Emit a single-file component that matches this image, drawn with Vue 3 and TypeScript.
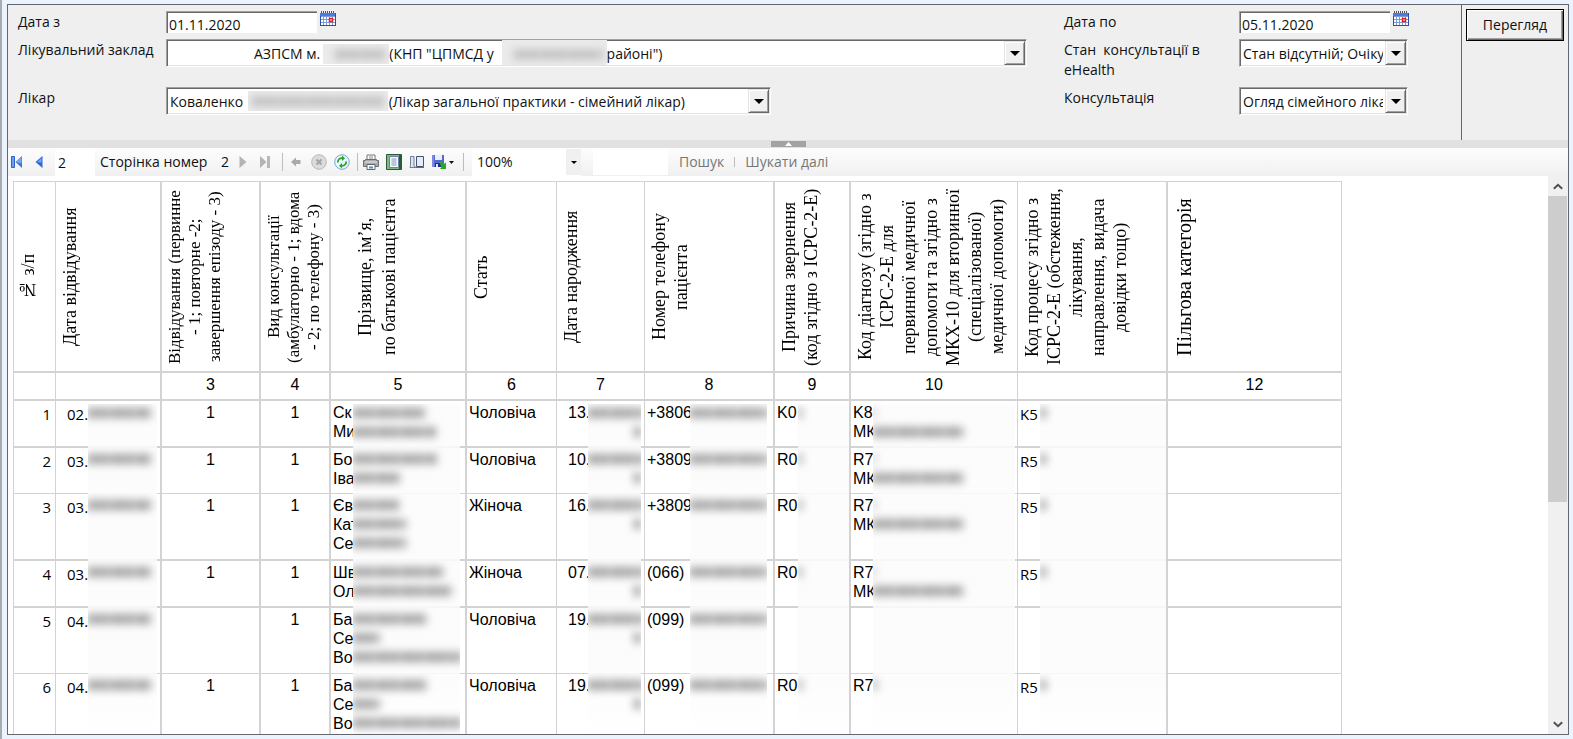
<script setup lang="ts">
import { ref } from 'vue'

interface Column {
  key: string
  title: string[]
  num: string
  width: number
}

interface Cell {
  key: string
  lines: string[]
  hidden?: number[]
}

interface Row {
  height: number
  cells: Cell[]
}

const columns: Column[] = [
  { key: 'index', title: ['№ з/п'], num: '', width: 42 },
  { key: 'date', title: ['Дата відвідування'], num: '', width: 106 },
  { key: 'visit', title: ['Відвідування (первинне', '- 1; повторне -2;', 'завершення епізоду - 3)'], num: '3', width: 99 },
  { key: 'kind', title: ['Вид консультації', '(амбулаторно - 1; вдома', '- 2; по телефону - 3)'], num: '4', width: 70 },
  { key: 'name', title: ['Прізвище, ім’я,', 'по батькові пацієнта'], num: '5', width: 136 },
  { key: 'sex', title: ['Стать'], num: '6', width: 90 },
  { key: 'birth', title: ['Дата народження'], num: '7', width: 88 },
  { key: 'phone', title: ['Номер телефону', 'пацієнта'], num: '8', width: 130 },
  { key: 'reason', title: ['Причина звернення', '(код згідно з ICPC-2-E)'], num: '9', width: 76 },
  {
    key: 'diagnosis',
    title: ['Код діагнозу (згідно з', 'ICPC-2-E для', 'первинної медичної', 'допомоги та згідно з', 'МКХ-10 для вторинної', '(спеціалізованої)', 'медичної допомоги)'],
    num: '10',
    width: 167,
  },
  {
    key: 'process',
    title: ['Код процесу згідно з', 'ICPC-2-E (обстеження,', 'лікування,', 'направлення, видача', 'довідки тощо)'],
    num: '',
    width: 150,
  },
  { key: 'benefit', title: ['Пільгова категорія'], num: '12', width: 174 },
]

function makeRow(
  n: number, height: number, date: string, visit: string, name: string[], nameHidden: number[],
  sex: string, birth: string, phone: string, reason: string, diagnosis: string[], process: string,
): Row {
  return {
    height,
    cells: [
      { key: 'index', lines: [String(n)] },
      { key: 'date', lines: [date], hidden: [63] },
      { key: 'visit', lines: [visit] },
      { key: 'kind', lines: ['1'] },
      { key: 'name', lines: name, hidden: nameHidden },
      { key: 'sex', lines: [sex] },
      { key: 'birth', lines: [birth], hidden: [56, 7] },
      { key: 'phone', lines: [phone], hidden: [78] },
      { key: 'reason', lines: [reason], hidden: reason ? [4] : [] },
      { key: 'diagnosis', lines: diagnosis, hidden: diagnosis.length > 1 ? [2, 90] : diagnosis[0] ? [4] : [] },
      { key: 'process', lines: [process], hidden: process ? [6] : [] },
      { key: 'benefit', lines: [''] },
    ],
  }
}

const rows: Row[] = [
  makeRow(1, 47, '02.', '1', ['Ск', 'Ми'], [72, 83], 'Чоловіча', '13.', '+3806', 'K0', ['K8', 'МК'], 'K5'),
  makeRow(2, 46, '03.', '1', ['Бо', 'Іва'], [84, 47], 'Чоловіча', '10.', '+3809', 'R0', ['R7', 'МК'], 'R5'),
  makeRow(3, 67, '03.', '1', ['Єв', 'Кат', 'Сер'], [46, 53, 53], 'Жіноча', '16.', '+3809', 'R0', ['R7', 'МК'], 'R5'),
  makeRow(4, 47, '03.', '1', ['Шв', 'Оле'], [90, 99], 'Жіноча', '07.', '(066)', 'R0', ['R7', 'МК'], 'R5'),
  makeRow(5, 66, '04.', '', ['Ба', 'Се', 'Во'], [74, 27, 108], 'Чоловіча', '19.', '(099)', '', [''], ''),
  makeRow(6, 68, '04.', '1', ['Ба', 'Се', 'Во'], [74, 27, 108], 'Чоловіча', '19.', '(099)', 'R0', ['R7'], 'R5'),
]

const gap = (n: number): string => '\u00a0'.repeat(n)
const facility = `АЗПСМ м.${gap(19)}(КНП "ЦПМСД у${gap(31)}районі")`
const doctor = `Коваленко${gap(40)}(Лікар загальної практики - сімейний лікар)`

const dateFrom = ref('01.11.2020')
const dateTo = ref('05.11.2020')
const page = ref('2')
const search = ref('')
</script>

<template>
  <div class="window">
    <main class="viewer">
      <form class="params" @submit.prevent>
        <div class="fields">
          <label for="from">Дата з</label>
          <div class="picker">
            <input id="from" v-model="dateFrom" type="text">
            <button type="button" class="icon" aria-label="Календар">
              <svg width="16" height="16" viewBox="0 0 16 16">
                <path d="M0 2h16v13H0z" fill="#2c50a8" /><path d="M0 2h15v3H0z" fill="#4a7be0" />
                <path d="M1 5h14v9H1z" fill="#7d9bd8" />
                <path d="M1 6h2v2H1zM4 6h2v2H4zM7 6h2v2H7zM10 6h2v2h-2zM13 6h2v2h-2zM1 9h2v2H1zM4 9h2v2H4zM7 9h2v2H7zM13 9h2v2h-2zM1 12h2v2H1zM4 12h2v2H4zM7 12h2v2H7zM10 12h2v2h-2zM13 12h2v2h-2z" fill="#fff" />
                <path d="M9.500 7.500h3v3h-3z" fill="#fff" stroke="#f01818" stroke-width="1.500" />
                <path d="M1 1h14" stroke="#555" stroke-dasharray="1 1" stroke-width="2" />
              </svg>
            </button>
          </div>
          <label for="to">Дата по</label>
          <div class="picker">
            <input id="to" v-model="dateTo" type="text">
            <button type="button" class="icon" aria-label="Календар">
              <svg width="16" height="16" viewBox="0 0 16 16">
                <path d="M0 2h16v13H0z" fill="#2c50a8" /><path d="M0 2h15v3H0z" fill="#4a7be0" />
                <path d="M1 5h14v9H1z" fill="#7d9bd8" />
                <path d="M1 6h2v2H1zM4 6h2v2H4zM7 6h2v2H7zM10 6h2v2h-2zM13 6h2v2h-2zM1 9h2v2H1zM4 9h2v2H4zM7 9h2v2H7zM13 9h2v2h-2zM1 12h2v2H1zM4 12h2v2H4zM7 12h2v2H7zM10 12h2v2h-2zM13 12h2v2h-2z" fill="#fff" />
                <path d="M9.500 7.500h3v3h-3z" fill="#fff" stroke="#f01818" stroke-width="1.500" />
                <path d="M1 1h14" stroke="#555" stroke-dasharray="1 1" stroke-width="2" />
              </svg>
            </button>
          </div>

          <label for="facility">Лікувальний заклад</label>
          <div class="combo facility">
            <select id="facility"><option>{{ facility }}</option></select>
            <span class="arrow" />
            <span class="veil town"><i /></span>
            <span class="veil district"><i /></span>
          </div>
          <label for="state">Стан&nbsp; консультації в<br>eHealth</label>
          <div class="combo small">
            <select id="state"><option>Стан відсутній; Очікування</option></select>
            <span class="arrow" />
          </div>

          <label for="doctor">Лікар</label>
          <div class="combo doctor">
            <select id="doctor"><option>{{ doctor }}</option></select>
            <span class="arrow" />
            <span class="veil person"><i /></span>
          </div>
          <label for="consult">Консультація</label>
          <div class="combo small">
            <select id="consult"><option>Огляд сімейного лікаря</option></select>
            <span class="arrow" />
          </div>
        </div>
        <div class="actions">
          <button type="submit" class="view">Перегляд</button>
        </div>
      </form>

      <div class="splitter">
        <button type="button" class="handle" aria-label="Згорнути">
          <svg width="7" height="4" viewBox="0 0 7 4"><path d="M0 4 3.500 0 7 4z" fill="#fff" /></svg>
        </button>
      </div>

      <div class="toolbar">
        <button type="button" class="icon first" aria-label="Перша сторінка">
          <svg width="12" height="14" viewBox="0 0 12 14"><path d="M.5 1.500h3v11h-3z" fill="#6e9bee" stroke="#2f62cf" /><path d="M11 1v12L4.500 7z" fill="#3b74e2" /><path d="M10.500 1.500v7L5 7z" fill="#7aa5f2" /></svg>
        </button>
        <button type="button" class="icon prev" aria-label="Попередня сторінка">
          <svg width="8" height="14" viewBox="0 0 8 14"><path d="M7.500 1v12L.5 7z" fill="#2f66d8" /><path d="M6.500 3v4.500L2 7z" fill="#76a3f2" /></svg>
        </button>
        <input v-model="page" class="page" type="text" aria-label="Сторінка">
        <span class="caption">Сторінка номер</span>
        <span class="total">2</span>
        <button type="button" class="icon next" aria-label="Наступна сторінка">
          <svg width="8" height="14" viewBox="0 0 8 14"><path d="M.5 1v12l7-6z" fill="#b4b4b4" /></svg>
        </button>
        <button type="button" class="icon last" aria-label="Остання сторінка">
          <svg width="12" height="14" viewBox="0 0 12 14"><path d="M1 1v12l6.500-6z" fill="#b4b4b4" /><path d="M8 1h3v12H8z" fill="#b8b8b8" /></svg>
        </button>
        <span class="sep s1" />
        <button type="button" class="icon back" aria-label="Назад">
          <svg width="10" height="10" viewBox="0 0 10 10"><path d="M0 5 5 .5V3h4.500v4H5v2.500z" fill="#a9a9a9" /></svg>
        </button>
        <button type="button" class="icon stop" aria-label="Зупинити">
          <svg width="16" height="16" viewBox="0 0 16 16"><circle cx="8" cy="8" r="7.300" fill="#dcdcdc" stroke="#b9b9b9" /><path d="m5.500 5.500 5 5M10.500 5.500l-5 5" stroke="#a6a6a6" stroke-width="2.200" /></svg>
        </button>
        <button type="button" class="icon refresh" aria-label="Оновити">
          <svg width="16" height="16" viewBox="0 0 16 16"><circle cx="8" cy="8" r="7.300" fill="#e9f5ff" stroke="#79a9d8" /><path d="M3.800 8.500c0-2.800 1.700-4.300 4.200-4.300M12.200 7.500c0 2.800-1.700 4.300-4.200 4.300" fill="none" stroke="#28a428" stroke-width="1.800" /><path d="M8 1.500 11 4.200 8 7zM8 9l-3 2.800L8 14.500z" fill="#28a428" /></svg>
        </button>
        <span class="sep s2" />
        <button type="button" class="icon print" aria-label="Друк">
          <svg width="16" height="16" viewBox="0 0 16 16"><path d="M4 1h8v6H4z" fill="#fff" stroke="#777" /><path d="M6 3h4M6 5h4" stroke="#888" /><path d="M.5 6.500h2v-1h11v1h2v6H.5z" fill="#a8abb0" stroke="#6b6e73" /><path d="M2 8h12" stroke="#e7e7e7" /><path d="M4 10.500h8v5H4z" fill="#fff" stroke="#666" /><path d="M6 12.500h4v2H6z" fill="#4b90c5" /></svg>
        </button>
        <button type="button" class="icon layout" aria-label="Макет друку">
          <svg width="16" height="16" viewBox="0 0 16 16"><path d="M.5.5h15v15H.5z" fill="#7cba82" stroke="#2c5a38" /><path d="M13 1h2v14h-2z" fill="#2c5a38" /><path d="M3.500 2.500h9v11h-9z" fill="#f5f9ff" stroke="#6f82a4" /><path d="M5.500 5h5M5.500 7h5M5.500 9h5M5.500 11h5" stroke="#7f93bb" /></svg>
        </button>
        <button type="button" class="icon setup" aria-label="Параметри сторінки">
          <svg width="16" height="14" viewBox="0 0 16 14"><path d="M1.500 1.500h3.500v9.500l2 1.500H1l.5-2z" fill="#dce6f4" stroke="#717f98" /><path d="M7.500 1.500h7v10h-7z" fill="#e3ecf7" stroke="#47536d" /><path d="M7 12.500h8" stroke="#5d6a83" /></svg>
        </button>
        <button type="button" class="icon save" aria-label="Експорт">
          <svg width="24" height="16" viewBox="0 0 24 16"><path d="M1 1h12v12H1z" fill="#5668cf" /><path d="M1 1h2v12H1z" fill="#7b8be4" /><path d="M4 1h7v5H4z" fill="#e9edff" /><path d="M4 9h6v4H4z" fill="#242f83" /><path d="M5 10h2v3H5z" fill="#dfe4ff" /><path d="M8 8h3l2 2 2-1.500V15H9l1.500-2z" fill="#27a52c" /><path d="M18 7h5l-2.500 3z" fill="#111" /></svg>
        </button>
        <span class="sep s3" />
        <div class="zoom">
          <select aria-label="Масштаб"><option>100%</option></select>
          <span class="mini" />
        </div>
        <input v-model="search" class="search" type="text" aria-label="Текст пошуку">
        <a class="find" href="#find">Пошук</a>
        <span class="sep short" />
        <a class="find" href="#next">Шукати далі</a>
      </div>

      <div class="report">
        <div class="sheet">
          <table>
            <colgroup>
              <col v-for="c in columns" :key="c.key" :style="{ width: c.width + 'px' }">
            </colgroup>
            <thead>
              <tr class="titles">
                <th v-for="c in columns" :key="c.key" :class="c.key" scope="col">
                  <div class="turned">
                    <span v-for="t in c.title" :key="t">{{ t }}</span>
                  </div>
                </th>
              </tr>
              <tr class="numbers">
                <td v-for="c in columns" :key="c.key" :class="c.key">{{ c.num }}</td>
              </tr>
            </thead>
            <tbody>
              <tr v-for="(r, i) in rows" :key="i" :style="{ height: r.height + 'px' }">
                <td v-for="c in r.cells" :key="c.key" :class="c.key">
                  <div v-for="(l, j) in c.lines" :key="j" class="line">{{ l }}</div>
                  <div v-if="c.hidden" class="mask">
                    <i v-for="(w, k) in c.hidden" :key="k" :style="{ width: w + 'px' }" />
                  </div>
                </td>
              </tr>
            </tbody>
          </table>
        </div>
        <div class="scroll">
          <button type="button" class="icon" aria-label="Вгору">
            <svg width="10" height="7" viewBox="0 0 10 7"><path d="m.8 5.800 4.200-4 4.200 4" fill="none" stroke="#505050" stroke-width="2" /></svg>
          </button>
          <div class="track"><div class="thumb" /></div>
          <button type="button" class="icon" aria-label="Вниз">
            <svg width="10" height="7" viewBox="0 0 10 7"><path d="m.8 1.200 4.200 4 4.200-4" fill="none" stroke="#505050" stroke-width="2" /></svg>
          </button>
        </div>
      </div>
    </main>
  </div>
</template>

<style>
body {
  margin: 0;
}
</style>

<style scoped>
* {
  box-sizing: border-box;
}

.window {
  height: 100vh;
  padding: 4px 4px 4px 5px;
  border-left: 2px solid #a9abb0;
  background: #ebf3fe;
  font: 14px/20px "Open Sans", "Noto Sans", sans-serif;
  color: #111;
}

.viewer {
  height: 100%;
  display: flex;
  flex-direction: column;
  border: 1px solid #66666e;
  background: #fff;
}

input,
select,
button {
  font: inherit;
  color: inherit;
  margin: 0;
  border-radius: 0;
}

.params {
  display: flex;
  min-height: 135px;
  background: #efefef;
}

.fields {
  flex: 1;
  display: grid;
  grid-template-columns: 148px 1fr 175px 222px;
  grid-template-rows: 28px 48px auto;
  padding: 6px 0 0 10px;
}

.fields label {
  padding-top: 1px;
}

.picker {
  display: flex;
  gap: 3px;
  align-items: flex-start;
}

.picker input {
  width: 151px;
  height: 22px;
  padding: 4px 3px 0;
  border: 0;
  outline: none;
  background: #fff;
  box-shadow: inset 1px 1px #a0a0a0, inset 2px 2px #696969;
}

.icon {
  display: flex;
  align-items: center;
  justify-content: center;
  padding: 0;
  border: 0;
  background: none;
}

.combo {
  position: relative;
  height: 28px;
}

.combo.facility {
  margin-right: 37px;
}

.combo.doctor {
  width: 605px;
}

.combo.small {
  width: 169px;
}

.combo select {
  appearance: none;
  width: 100%;
  height: 28px;
  padding: 2px 24px 0 3px;
  border: 1px solid;
  border-color: #a0a0a0 #fff #fff #a0a0a0;
  outline: none;
  background: #fff;
  box-shadow: inset 1px 1px #696969, inset -1px -1px #e3e3e3;
}

.combo.facility select {
  padding-left: 87px;
}

.arrow {
  position: absolute;
  top: 2px;
  right: 2px;
  width: 21px;
  height: 24px;
  background: #f0f0f0;
  border: 1px solid;
  border-color: #e3e3e3 #696969 #696969 #e3e3e3;
  box-shadow: inset 1px 1px #fff, inset -1px -1px #a0a0a0;
  pointer-events: none;
}

.arrow::after {
  content: "";
  position: absolute;
  left: 5px;
  top: 9px;
  border: 5px solid transparent;
  border-top-color: #000;
  border-bottom: 0;
}

.veil {
  position: absolute;
  top: 5px;
  height: 20px;
  overflow: hidden;
  background: #ebebeb;
  pointer-events: none;
}

.veil i {
  display: block;
  height: 9px;
  margin: 6px 4px 0 12px;
  background: repeating-linear-gradient(90deg, #b8b8b8 0 8px, #c9c9c9 8px 11px, #bcbcbc 11px 24px, #cecece 24px 28px);
  filter: blur(4px);
}

.veil.town {
  left: 157px;
  width: 66px;
}

.veil.district {
  top: 1px;
  left: 336px;
  width: 105px;
  height: 25px;
}

.veil.district i {
  margin-top: 10px;
}

.veil.person {
  top: 4px;
  left: 82px;
  width: 140px;
}

.veil.person i {
  margin-left: 4px;
}

.actions {
  width: 107px;
  padding: 4px;
  border-left: 1px solid #66666e;
}

.view {
  display: block;
  width: 98px;
  height: 32px;
  padding: 0;
  border: 1px solid #000;
  background: #f0f0f0;
  box-shadow: inset 1px 1px #fff, inset -1px -1px #696969, inset -2px -2px #a0a0a0;
}

.splitter {
  flex: none;
  display: flex;
  justify-content: center;
  height: 8px;
  padding-top: 1px;
  background: #e1e1e1;
}

.handle {
  width: 35px;
  height: 6px;
  display: flex;
  justify-content: center;
  align-items: center;
  padding: 0;
  border: 0;
  background: #a3a3a3;
}

.toolbar {
  flex: none;
  display: flex;
  align-items: center;
  height: 28px;
  padding-left: 3px;
  background: linear-gradient(#fdfdfd, #f0f0f0);
}

.toolbar svg {
  display: block;
}

.prev {
  margin-left: 12px;
}

.page {
  width: 40px;
  height: 27px;
  margin-left: 12px;
  padding: 0 3px;
  border: 0;
  background: #fff;
}

.caption {
  width: 121px;
  margin-left: 5px;
}

.total {
  width: 18px;
}

.last {
  margin-left: 12px;
}

.sep {
  width: 1px;
  height: 18px;
  background: #bdbdbd;
}

.s1 {
  margin: 0 8px 0 11px;
}

.stop {
  margin-left: 10px;
}

.refresh {
  margin-left: 7px;
}

.s2 {
  margin: 0 5px 0 7px;
}

.layout,
.setup {
  margin-left: 7px;
}

.save {
  margin-left: 6px;
}

.s3 {
  margin: 0 8px;
}

.zoom {
  position: relative;
  width: 109px;
  height: 27px;
}

.zoom select {
  appearance: none;
  width: 100%;
  height: 27px;
  padding: 0 5px;
  border: 0;
  background: #fff;
}

.mini {
  position: absolute;
  top: 0;
  right: 0;
  width: 15px;
  height: 26px;
  background: #f0f0f0;
  pointer-events: none;
}

.mini::after {
  content: "";
  position: absolute;
  left: 5px;
  top: 12px;
  border: 3px solid transparent;
  border-top-color: #000;
  border-bottom: 0;
}

.search {
  width: 75px;
  height: 26px;
  margin: 0 11px 0 12px;
  padding: 0 3px;
  border: 0;
  background: #fff;
}

.find {
  color: #767676;
  text-decoration: none;
}

.short {
  height: 10px;
  margin: 0 10px;
}

.report {
  flex: 1;
  min-height: 0;
  display: flex;
}

.sheet {
  flex: 1;
  min-width: 0;
  overflow: hidden;
  padding: 5px 0 0 5px;
}

table {
  width: 1329px;
  table-layout: fixed;
  border-collapse: separate;
  border-spacing: 0;
  border: solid #d3d3d3;
  border-width: 1px 0 0 1px;
  font: 16px/19px "Liberation Sans", Arial, sans-serif;
  color: #000;
}

th,
td {
  position: relative;
  padding: 2px 2px 0;
  border: solid #d3d3d3;
  border-width: 0 2px 2px 0;
  vertical-align: top;
  font-weight: 400;
}

.index,
.sex,
.birth,
.diagnosis,
.benefit {
  border-right-width: 1px;
}

tbody tr:nth-child(2) td,
tbody tr:nth-child(5) td {
  border-bottom-width: 1px;
}

.titles {
  height: 191px;
}

.titles th {
  padding: 0 0 0 3px;
  vertical-align: middle;
  font: 18px/22px "Liberation Serif", "Times New Roman", serif;
}

.titles .visit,
.titles .kind {
  font-size: 17px;
  line-height: 20px;
}

.titles .name {
  padding-left: 22px;
  line-height: 24px;
}

.titles .benefit {
  padding-left: 5px;
  font-size: 20px;
}

.turned {
  writing-mode: vertical-rl;
  transform: rotate(180deg);
  height: 188px;
  text-align: center;
  white-space: nowrap;
}

.turned span {
  display: block;
}

.numbers {
  height: 28px;
}

.numbers td,
tbody .visit,
tbody .kind {
  text-align: center;
}

.line {
  min-height: 19px;
}

tbody .index,
tbody .date,
tbody .process {
  padding-top: 4px;
  font-family: "Open Sans", "Noto Sans", sans-serif;
  font-size: 15px;
}

tbody .index {
  padding-right: 4px;
  text-align: right;
}

tbody .date,
tbody .birth {
  padding-left: 11px;
}

.mask {
  position: absolute;
  top: 0;
  bottom: -2px;
  padding-top: 2px;
  overflow: hidden;
  background: #fcfcfc;
  border-bottom: 2px solid #f6f6f6;
}

tbody tr:first-child .mask {
  top: 3px;
  padding-top: 0;
}

tbody tr:last-child .mask {
  background: linear-gradient(#fcfcfc, #fff);
}

.mask i {
  display: block;
  height: 10px;
  margin: 4px 0 9px;
  background: repeating-linear-gradient(90deg, #989898 0 7px, #b4b4b4 7px 10px, #a2a2a2 10px 21px, #c2c2c2 21px 25px);
  filter: blur(4px);
}

.date .mask {
  left: 32px;
  right: 3px;
}

.name .mask {
  left: 22px;
  right: 5px;
}

.birth .mask {
  left: 31px;
  right: 3px;
}

.birth .mask i {
  margin-left: auto;
}

.phone .mask {
  left: 45px;
  right: 6px;
}

.reason .mask {
  left: 23px;
  right: 0;
}

.diagnosis .mask {
  left: 22px;
  right: 2px;
}

.process .mask {
  left: 22px;
  right: 0;
}

.scroll {
  width: 20px;
  display: flex;
  flex-direction: column;
  background: #f0f0f0;
}

.scroll .icon {
  height: 20px;
}

.track {
  flex: 1;
}

.thumb {
  width: 19px;
  height: 59%;
  background: #cdcdcd;
}
</style>
